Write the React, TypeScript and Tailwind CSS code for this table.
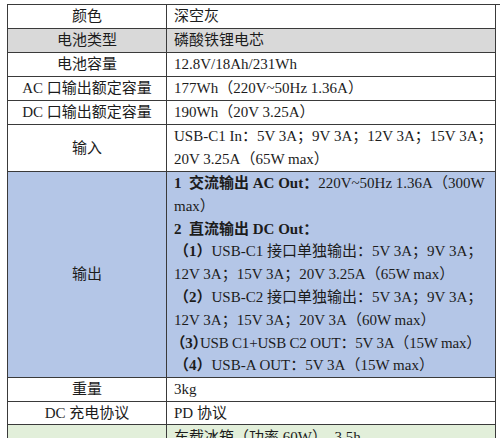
const font = { fontFamily: '"Liberation Serif", "Noto Sans CJK SC", serif' };

const rows: { label: string; value: string; bg?: string }[] = [
  { label: '颜色', value: '深空灰' },
  { label: '电池类型', value: '磷酸铁锂电芯', bg: 'bg-[#d9d9d9]' },
  { label: '电池容量', value: '12.8V/18Ah/231Wh' },
  { label: 'AC 口输出额定容量', value: '177Wh（220V~50Hz 1.36A）' },
  { label: 'DC 口输出额定容量', value: '190Wh（20V 3.25A）' },
];

function Cell({ children, className = '' }: { children?: React.ReactNode; className?: string }) {
  return <div className={`border-r border-b border-[#3a3a3a] ${className}`}>{children}</div>;
}

export default function App() {
  return (
    <div className="w-[500px] h-[438px] overflow-hidden bg-white pt-[4px] pl-[7px] text-[15px] text-[#1c1c1c]" style={font}>
      <div className="grid grid-cols-[159px_329px] border-l border-t border-[#3a3a3a] leading-[23px]">
        {rows.map((r) => (
          <div key={r.label} className="contents">
            <Cell className={`h-[24px] text-center ${r.bg ?? ''}`}>{r.label}</Cell>
            <Cell className={`h-[24px] pl-[7px] ${r.bg ?? ''}`}>{r.value}</Cell>
          </div>
        ))}

        <Cell className="h-[47px] flex items-center justify-center">输入</Cell>
        <Cell className="h-[47px] pl-[7px]">
          <div>USB-C1 In：5V 3A；9V 3A；12V 3A；15V 3A；</div>
          <div>20V 3.25A（65W max）</div>
        </Cell>

        <Cell className="h-[206px] flex items-center justify-center bg-[#b4c6e7]">输出</Cell>
        <Cell className="h-[206px] overflow-hidden pl-[7px] pr-[4px] bg-[#b4c6e7] leading-[22.8px]">
          <div>
            <b>1&nbsp; 交流输出 AC Out：</b>220V~50Hz 1.36A（300W max）
          </div>
          <div>
            <b>2&nbsp; 直流输出 DC Out：</b>
          </div>
          <div>
            <b>（1）</b>USB-C1 接口单独输出：5V 3A；9V 3A；12V 3A；15V 3A；20V 3.25A（65W max）
          </div>
          <div>
            <b>（2）</b>USB-C2 接口单独输出：5V 3A；9V 3A；12V 3A；15V 3A；20V 3A（60W max）
          </div>
          <div className="whitespace-nowrap tracking-[-0.2px]">
            <b className="pl-[4px] [font-feature-settings:'halt']">（3）</b>USB C1+USB C2 OUT：5V 3A（15W max）
          </div>
          <div>
            <b>（4）</b>USB-A OUT：5V 3A（15W max）
          </div>
        </Cell>

        <Cell className="h-[24px] text-center">重量</Cell>
        <Cell className="h-[24px] pl-[7px]">3kg</Cell>

        <Cell className="h-[23px] text-center">DC 充电协议</Cell>
        <Cell className="h-[23px] pl-[7px]">PD 协议</Cell>

        <Cell className="h-[47px] bg-[#e2efda]" />
        <Cell className="h-[47px] pl-[7px] pt-[1px] bg-[#e2efda]">车载冰箱（功率 60W），3.5h</Cell>
      </div>
    </div>
  );
}
